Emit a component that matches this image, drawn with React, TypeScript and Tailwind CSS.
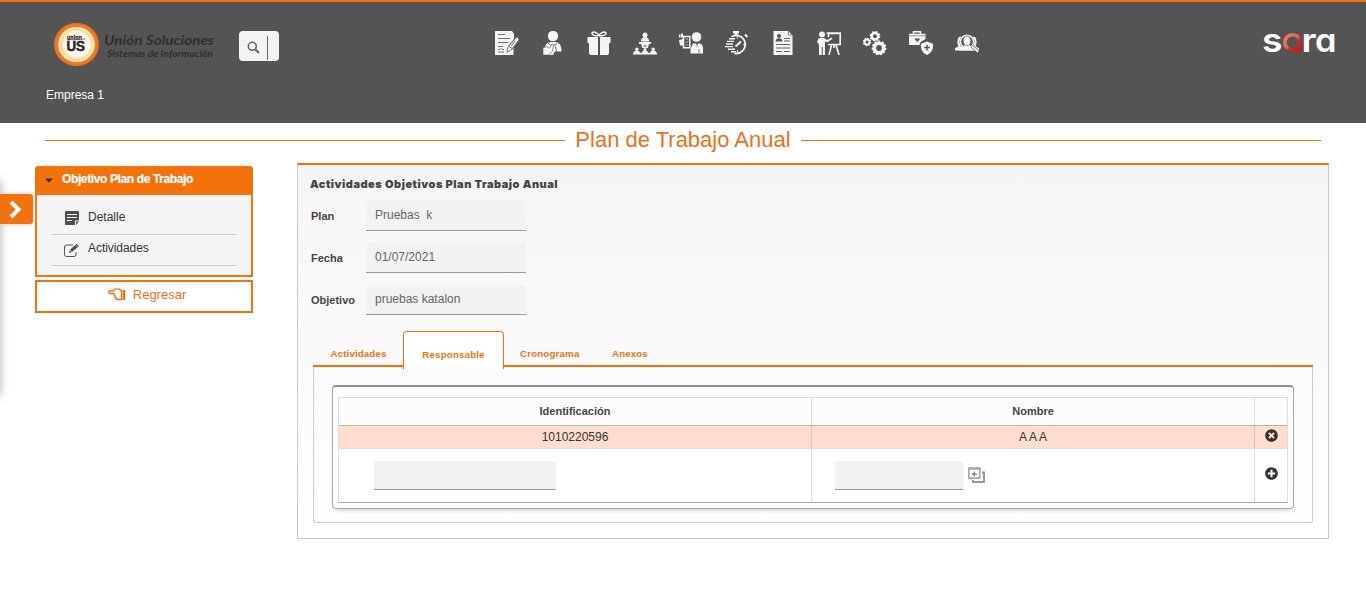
import React from "react";
import { FaCaretDown, FaTimesCircle, FaPlusCircle } from "react-icons/fa";

const D = "#545454";

function TopIcon({ children }: { children: React.ReactNode }) {
  return (
    <a className="block h-6 w-6" href="#">
      <svg viewBox="0 0 24 24" className="h-6 w-6" fill="#f5f5f5">{children}</svg>
    </a>
  );
}

function Gear({ x, y, r, hole, teeth }: { x: number; y: number; r: number; hole: number; teeth: number }) {
  return (
    <g>
      <circle cx={x} cy={y} r={r - 0.7} fill="none" stroke="#f5f5f5" strokeWidth="1.4" strokeDasharray={`${((r - 0.7) * Math.PI) / teeth}`} />
      <circle cx={x} cy={y} r={r - 0.8} />
      <circle cx={x} cy={y} r={hole} fill={D} />
    </g>
  );
}

function TopIcons() {
  return (
    <nav className="flex gap-[22px]">
      <TopIcon>
        <path d="M0 0h17l2 3v5l-5 6-2 6 5-1.500 1.500-2V24H0z" />
        <path d="M3 3.500h7M3 7.500h12M3 11.500h10M3 15.500h5M3 18.500h2l1-1 1 1h2M3 21h6" stroke={D} strokeWidth=".8" fill="none" />
        <path d="M21.500 6.200c1.500.2 3 1.500 2.300 2.900l-7.300 9.800-4.600 2.500 1-5.500z" stroke={D} strokeWidth=".7" />
        <path d="M14 15.500l3 2M16.500 14.500l4-5" stroke={D} strokeWidth=".8" />
      </TopIcon>
      <TopIcon>
        <circle cx="12" cy="5" r="5.200" />
        <path d="M4 17c0-4 3-6 7-6h3c4.500 0 6.500 3.500 6.500 9.500H14l-2 3.500H3z" />
        <path d="M7 12l4 3.500 5-3M14 14.500l1.500 5.500-2.500 3" stroke={D} strokeWidth=".8" fill="none" />
        <path d="M2 16.500l4-.8 2.500 1.500L11 13l1.500.8-1 6.200-3.500 4H2z" stroke={D} strokeWidth=".6" />
      </TopIcon>
      <TopIcon>
        <path d="M.500 6H11v6H.500zM13 6h10.500v6H13zM2 12h9V24H4a2 2 0 0 1-2-2zM13 12h9V22a2 2 0 0 1-2 2h-7z" />
        <path d="M12 4.800C10.500.800 5 .2 5 2.500S9 4.800 12 4.800zm0 0c1.500-4 7-4.600 7-2.300S15 4.800 12 4.800z" fill="none" stroke="#f5f5f5" strokeWidth="1.600" />
      </TopIcon>
      <TopIcon>
        <circle cx="12" cy="4" r="2.500" />
        <path d="M7.800 10.500c0-6 8.400-6 8.400 0zM6 11h12v2H6zM8 13h8l-1.200 4H9.200zM0 21.800h24v1.700H0zM.500 22c0-3.500 6.500-3.500 6.500 0zM8.700 22c0-3.500 6.600-3.500 6.600 0zM17 22c0-3.500 6.500-3.500 6.500 0z" />
        <circle cx="3.800" cy="18.300" r="1.700" /><circle cx="12" cy="18.500" r="1.600" /><circle cx="20.200" cy="18.300" r="1.700" />
        <path d="M10 15h4M12 13.500v2.500" stroke={D} strokeWidth=".6" />
      </TopIcon>
      <TopIcon>
        <circle cx="17.500" cy="6" r="4.800" />
        <path d="M11.500 22.500V18l2.500-5.500h6.500c2 0 3.500 2 3.500 5v5z" />
        <path d="M17.200 12l.8 4 1-4z" fill={D} />
        <path d="M4.500 5.500h6.300v11.300H4.500z" fill={D} stroke="#f5f5f5" strokeWidth="1.500" />
        <path d="M0 3.500h1.500v3H0zM2 2.500h2v4H2zM0 9l4-1v6.500H1z" />
        <path d="M6.500 8h2.500M6.500 11h2.500M6.500 14h2.500" stroke="#ccc" strokeWidth=".8" />
        <path d="M20 18v4.500" stroke={D} strokeWidth=".7" />
      </TopIcon>
      <TopIcon>
        <path d="M8 0h6v2.500H8zM9.500 2h3v2h-3z" />
        <path d="M6.500 5.800a9 9 0 1 1 3 16.500M20 3.500l2.500 2.500M10.500 15.500l5.500-5" fill="none" stroke="#f5f5f5" strokeWidth="1.900" />
        <path d="M4 7.800h6M2 10.400h7M1 13h7M0 15.600h8M3 18.200h7M6 20.800h5" stroke="#f5f5f5" strokeWidth="1.400" />
        <path d="M12.300 5.500v2M20.300 13.500h-2M12.500 21v-2" stroke="#f5f5f5" />
      </TopIcon>
      <TopIcon>
        <path d="M2.500 0h15l4 4.500V24h-19z" />
        <path d="M17.500 0v4h4" fill="none" stroke={D} strokeWidth=".7" />
        <circle cx="8" cy="5" r="2" fill={D} />
        <path d="M4.500 10.500c0-4.500 7-4.500 7 0z" fill={D} />
        <path d="M13 7.500h6M13 10h6M5 13.500h14M5 17h14M5 20.500h6M13 20.500h6" stroke={D} strokeWidth=".9" />
      </TopIcon>
      <TopIcon>
        <circle cx="5" cy="3.500" r="3" />
        <path d="M1 8.500C1 7 3 7 4 7h3l3 2 4.500-2.500 1 1.500-5.500 3.500-2-1V24H5.700v-8H4.700v8H2V13.500L0 11z" />
        <path d="M9.500 2H24M11.500 6V2.500h11.700v11H11M14.500 14l-2.500 10M19 14l3 10M17 14v3" fill="none" stroke="#f5f5f5" strokeWidth="1.700" />
      </TopIcon>
      <TopIcon>
        <Gear x={12} y={5.200} r={5.300} hole={1.900} teeth={8} />
        <Gear x={4} y={11} r={4.300} hole={1.600} teeth={8} />
        <Gear x={16} y={17} r={7.400} hole={2.900} teeth={11} />
      </TopIcon>
      <TopIcon>
        <path d="M0 2.800h16.500V8l-5 3-1 3H0z" />
        <path d="M4.500 3V.8h7V3" fill="none" stroke="#f5f5f5" strokeWidth="1.500" />
        <path d="M0 4.800h16.500" stroke={D} strokeWidth=".6" />
        <path d="M5.500 8l1.500-1 1.300 1 1.300-1L11 8l-2.700 3z" fill={D} />
        <path d="M18 10.500l6 2.300c.4 5-1 9-6 11.200-5-2.200-6.400-6.200-6-11.200z" />
        <path d="M18 13.800v5.700M15.200 16.600h5.600" stroke={D} strokeWidth="1.500" />
      </TopIcon>
      <TopIcon>
        <path d="M0 19.500v-2.300l3.500-2c-2-3-1-9.500 1.500-9.500 1 0 2 .5 2.500 1.300 2.500-3 6.500-3 9 0 .5-.8 1.500-1.300 2.500-1.300 2.500 0 3.500 6.500 1.500 9.500l3.500 2v2.300z" />
        <circle cx="12" cy="10.700" r="7.500" fill={D} />
        <circle cx="12" cy="10.700" r="6.500" fill={D} stroke="#f5f5f5" strokeWidth="1.400" />
        <path d="M4 19.500c1-3.500 5-4 5.500-5.500h5c.5 1.500 4.500 2 5.500 5.500z" />
        <ellipse cx="12" cy="9.800" rx="3.800" ry="4.900" stroke={D} strokeWidth=".6" />
        <path d="M16.700 15.200l6.500 5.600" stroke={D} strokeWidth="3" />
        <path d="M16.700 15.200l6.500 5.600" stroke="#f5f5f5" strokeWidth="1.800" />
      </TopIcon>
    </nav>
  );
}

function CompanyLogo() {
  return (
    <svg viewBox="0 0 164 48" className="h-12 w-[164px] overflow-visible">
      <defs>
        <radialGradient id="ring">
          <stop offset="0.4" stopColor="#fff" />
          <stop offset="0.6" stopColor="#fdf3cc" />
          <stop offset="0.7" stopColor="#f2d68f" />
          <stop offset="0.76" stopColor="#fff4df" />
          <stop offset="0.8" stopColor="#f6c79a" />
          <stop offset="0.83" stopColor="#ee8029" />
          <stop offset="1" stopColor="#e96c1d" />
        </radialGradient>
      </defs>
      <ellipse cx="23.500" cy="23.500" rx="22.500" ry="21.700" fill="url(#ring)" />
      <text x="14" y="18.500" fontFamily="Liberation Sans" fontWeight="700" fontSize="7" textLength="15" lengthAdjust="spacingAndGlyphs" fill="#2b2728" stroke="#2b2728" strokeWidth=".3">union</text>
      <path d="M29 18h3.500" stroke="#e34838" />
      <text x="13.500" y="30" fontFamily="Liberation Sans" fontWeight="700" fontSize="14" textLength="18.500" lengthAdjust="spacingAndGlyphs" fill="#2b2728" stroke="#2b2728" strokeWidth=".6">US</text>
      <text x="51" y="24" fontFamily="Lato" fontWeight="700" fontStyle="italic" fontSize="13.500" textLength="110" lengthAdjust="spacingAndGlyphs" fill="#302e2f">Unión Soluciones</text>
      <text x="54" y="35.700" fontFamily="Lato" fontWeight="700" fontStyle="italic" fontSize="9.500" textLength="106" lengthAdjust="spacingAndGlyphs" fill="#302e2f">Sistemas de Información</text>
    </svg>
  );
}

function SaraLogo() {
  return (
    <svg viewBox="0 0 74 48" className="h-12 w-[74px] overflow-visible">
      <defs>
        <linearGradient id="drop" x1="0" y1="0" x2="1" y2="1">
          <stop offset="0" stopColor="#f58268" />
          <stop offset="0.48" stopColor="#e9604c" />
          <stop offset="0.62" stopColor="#c72926" />
          <stop offset="1" stopColor="#b51d20" />
        </linearGradient>
      </defs>
      <g fontFamily="Inter, sans-serif" fontWeight="600" fill="#fff" fontSize="33" className="[font-feature-settings:'cv11']">
        <text x="0" y="34" textLength="20.500" lengthAdjust="spacingAndGlyphs">s</text>
        <text x="39.500" y="34" textLength="15" lengthAdjust="spacingAndGlyphs">r</text>
        <text x="53" y="34" textLength="21.500" lengthAdjust="spacingAndGlyphs">a</text>
      </g>
      <path fillRule="evenodd" fill="url(#drop)" d="M30.500 15c5.500 0 9.500 4 9.500 9.300V34h-9.500a9.500 9.500 0 0 1 0-19zm0 3.500a5.800 5.800 0 1 0 0 11.600c3.500 0 5.500-2.300 5.800-5.800 0-3.300-2.500-5.800-5.800-5.800z" />
    </svg>
  );
}

function Header() {
  return (
    <header className="flex h-[123px] flex-col border-t-2 border-[#f4720b] bg-[#545454]">
      <div className="flex h-[76px] items-start">
        <div className="ml-[53px] mt-[19px] w-[186px]"><CompanyLogo /></div>
        <div className="mt-[29px] flex h-[30px] w-10 items-center rounded-[4px] bg-[#f3f3f3] pl-2">
          <svg viewBox="0 0 13 13" className="mt-[3px] h-[13px] w-[13px]" fill="none" stroke="#666">
            <circle cx="5.300" cy="5.300" r="4" strokeWidth="1.600" /><path d="M8.300 8.300l3.700 3.700" strokeWidth="2" />
          </svg>
          <span className="ml-[7px] mt-[3px] h-6 w-px bg-[#666]" />
        </div>
        <div className="ml-[216px] mt-[29px]"><TopIcons /></div>
        <div className="ml-auto mr-[30px] mt-[16px]"><SaraLogo /></div>
      </div>
      <div className="ml-[46px] mt-[8px] text-[12px] leading-[18px] text-white">Empresa 1</div>
    </header>
  );
}

function Sidebar() {
  return (
    <aside className="mt-[3px] w-[218px]">
      <section className="h-[111px] rounded-t-[3px] border-2 border-[#f4720b] bg-[#f5f5f5]">
        <h2 className="flex h-[27px] items-center bg-[#f4720b] pb-[5px] pl-[7px] text-[12px] font-bold text-white [text-shadow:0_0_1px_#fff8]">
          <FaCaretDown className="h-3 w-[10px] translate-y-px text-[#333]" />
          <span className="ml-[8px] tracking-[-0.38px]">Objetivo Plan de Trabajo</span>
        </h2>
        <ul className="ml-[15px] w-[184px] pt-[5px] text-[12px] text-[#333]">
          <li className="flex h-[35px] items-center border-b border-[#ccc] pl-[13px]">
            <svg viewBox="0 0 14 14" className="mt-[2px] h-[14px] w-[14px]">
              <path d="M1 0h12a1 1 0 0 1 1 1v8.500h-4V14H1a1 1 0 0 1-1-1V1a1 1 0 0 1 1-1zM11 10.500h3L11 14z" fill="#505050" />
              <path d="M2 3.500h10M2 6.500h10M2 9.500h5" stroke="#fff" strokeWidth="1.200" />
            </svg>
            <span className="ml-[9px]">Detalle</span>
          </li>
          <li className="flex h-[31px] items-center border-b border-[#ccc] pl-3">
            <svg viewBox="0 0 16 14" className="h-[14px] w-4" fill="none" stroke="#505050">
              <path d="M9 2H2.500A2 2 0 0 0 .5 4v7.500a2 2 0 0 0 2 2H10a2 2 0 0 0 2-2V9" />
              <path d="M5 10l1-3.200L12.500.700l2.600 2.200L8 9z" fill="#505050" stroke="none" />
              <path d="M11.500 1.700l2.500 2.300M6 7l2 2" stroke="#f5f5f5" strokeWidth=".6" />
            </svg>
            <span className="-mt-[5px] ml-2 tracking-[-0.05px]">Actividades</span>
          </li>
        </ul>
      </section>
      <button className="mt-[3px] flex h-[33px] w-[218px] items-center justify-center border-2 border-[#f4720b] bg-white pb-[3px] pl-[6px] text-[13px] text-[#ef7019]">
        <svg viewBox="0 0 18 13" className="-mt-[2px] mr-[7px] h-[13px] w-[18px]" fill="none" stroke="currentColor" strokeWidth="1.300">
          <path d="M13.500 11.500H9.500c-2 0-2-1.500-1.500-2-1.500-.5-1.500-1.500-1-2.200C6 6.800 6 5.700 6.500 5.500H2C.300 5.500.300 3 2 3h3.500C6 1.500 7.500.500 8.700 1.200h2.800L13.500 3z" />
          <path d="M16 2V12" strokeWidth="2.600" />
        </svg>
        Regresar
      </button>
    </aside>
  );
}

function Field({ label, value }: { label: string; value: string }) {
  return (
    <div className="mb-3 flex h-[30px] items-center">
      <label className="w-14 pl-px text-[11px] font-bold text-[#444]">{label}</label>
      <div className="h-[30px] w-[160px] whitespace-pre rounded-t-[3px] border-b border-[#999] bg-[#f2f2f2] pl-[9px] pt-[5px] text-[12px] leading-[18px] text-[#666]">{value}</div>
    </div>
  );
}

function ResponsibleTable() {
  const cols = "grid grid-cols-[473px_443px_34px]";
  return (
    <div className="ml-[18px] h-[124px] w-[962px] rounded-[4px] border border-t-2 border-[#aaa] border-t-[#909090] bg-[#fdfdfd] pl-[5px] pt-[10px] shadow-[0_4px_5px_-3px_#ccc]">
      <div className="h-[106px] w-[950px] border border-[#ddd] border-b-[#aaa] bg-white text-center text-[#333]">
        <div className={`${cols} h-[28px] border-b border-[#b5b5b5] bg-[#fcfcfc] text-[11px] font-bold leading-[27px] text-[#444]`}>
          <div className="border-r border-[#ddd]">Identificación</div>
          <div className="border-r border-[#ddd]">Nombre</div>
          <div />
        </div>
        <div className={`${cols} h-[23px] border-b border-[#ddd] bg-[#ffdecd] text-[12px] leading-[22px]`}>
          <div className="border-r border-[#d4c3bb]">1010220596</div>
          <div className="border-r border-[#d4c3bb]">A A A</div>
          <div className="flex justify-center pt-[3px]"><FaTimesCircle className="h-[13px] w-[13px] -translate-x-px" /></div>
        </div>
        <div className={`${cols} h-[53px]`}>
          <div className="border-r border-[#ddd] pl-[35px] pt-3"><div className="h-[29px] w-[182px] rounded-t-[2px] border-b border-[#999] bg-[#f2f2f2]" /></div>
          <div className="flex border-r border-[#ddd] pl-[23px] pt-3">
            <div className="h-[29px] w-[128px] rounded-t-[2px] border-b border-[#999] bg-[#f2f2f2]" />
            <svg viewBox="0 0 18 16" className="ml-[5px] mt-[6px] h-4 w-[18px]" fill="none" stroke="#aaa">
              <path d="M.8 1.500h11v9.700h-11z" strokeWidth="1.700" /><path d="M0 1.500h12.600" strokeWidth="2.500" />
              <path d="M6.300 4.500v5M3.800 7h5" stroke="#888" strokeWidth="1.400" />
              <path d="M14 5.500h2V15H5v-2" stroke="#999" strokeWidth="2" />
            </svg>
          </div>
          <div className="flex justify-center pt-[18px]"><FaPlusCircle className="h-[13px] w-[13px] -translate-x-px" /></div>
        </div>
      </div>
    </div>
  );
}

function Tabs() {
  return (
    <div className="mt-4 w-[1000px]">
      <div className="flex h-[36px] items-end text-[9.750px] font-bold text-[#f4720b]">
        <div className="flex h-[36px] w-[90px] items-center justify-center border-b-2 border-[#f4720b] pl-px pt-[13px] tracking-[0.1px]">Actividades</div>
        <div className="relative z-10 -mb-[2px] flex h-[38px] w-[101px] items-center justify-center rounded-t-[4px] border border-b-0 border-[#f4720b] bg-white pt-[10px] tracking-[0.15px]">Responsable</div>
        <div className="flex h-[36px] flex-1 items-center border-b-2 border-[#f4720b] pl-4 pt-[13px]">
          <span className="w-[92px] tracking-[0.15px]">Cronograma</span><span className="tracking-[0.1px]">Anexos</span>
        </div>
      </div>
      <div className="h-[156px] rounded-b-[3px] border border-t-0 border-[#ccc] pt-[18px]"><ResponsibleTable /></div>
    </div>
  );
}

function DrawerToggle() {
  return (
    <>
      <div className="absolute -left-2 top-[180px] h-[216px] w-2 shadow-[0_0_8px_0_#aaa]" />
      <button className="absolute left-0 top-[194px] flex h-[30px] w-[33px] items-center rounded-r-[3px] bg-[#f4720b] pl-[8px] text-white shadow-[0_0_5px_#ccc]">
        <svg viewBox="0 0 16 20" className="h-5 w-4" fill="none" stroke="currentColor" strokeWidth="4"><path d="M3 3l7.500 7.500L3 18" /></svg>
      </button>
    </>
  );
}

export default function App() {
  return (
    <div className="relative h-[612px] w-[1366px] overflow-hidden bg-white font-['Liberation_Sans',Arial,sans-serif]">
      <Header />
      <DrawerToggle />
      <h1 className="mx-[45px] flex h-[34px] items-center text-[22px] leading-none text-[#ef7019]">
        <span className="h-px flex-1 bg-[#f4720b]" /><span className="mx-[10px]">Plan de Trabajo Anual</span><span className="h-px flex-1 bg-[#f4720b]" />
      </h1>
      <main className="mt-[6px] flex pl-[35px]">
        <Sidebar />
        <section className="ml-11 h-[376px] w-[1032px] border border-t-2 border-[#c8c8c8] border-t-[#f4720b] bg-gradient-to-b from-[#f5f5f5] to-white">
          <h2 className="ml-[12px] mt-[12px] h-[24px] font-['Inter',sans-serif] text-[11px] font-black leading-[14px] tracking-[0.51px] text-[#444]">Actividades Objetivos Plan Trabajo Anual</h2>
          <div className="ml-[12px]">
            <Field label="Plan" value="Pruebas  k" />
            <Field label="Fecha" value="01/07/2021" />
            <Field label="Objetivo" value="pruebas katalon" />
          </div>
          <div className="ml-[15px]"><Tabs /></div>
        </section>
      </main>
    </div>
  );
}
